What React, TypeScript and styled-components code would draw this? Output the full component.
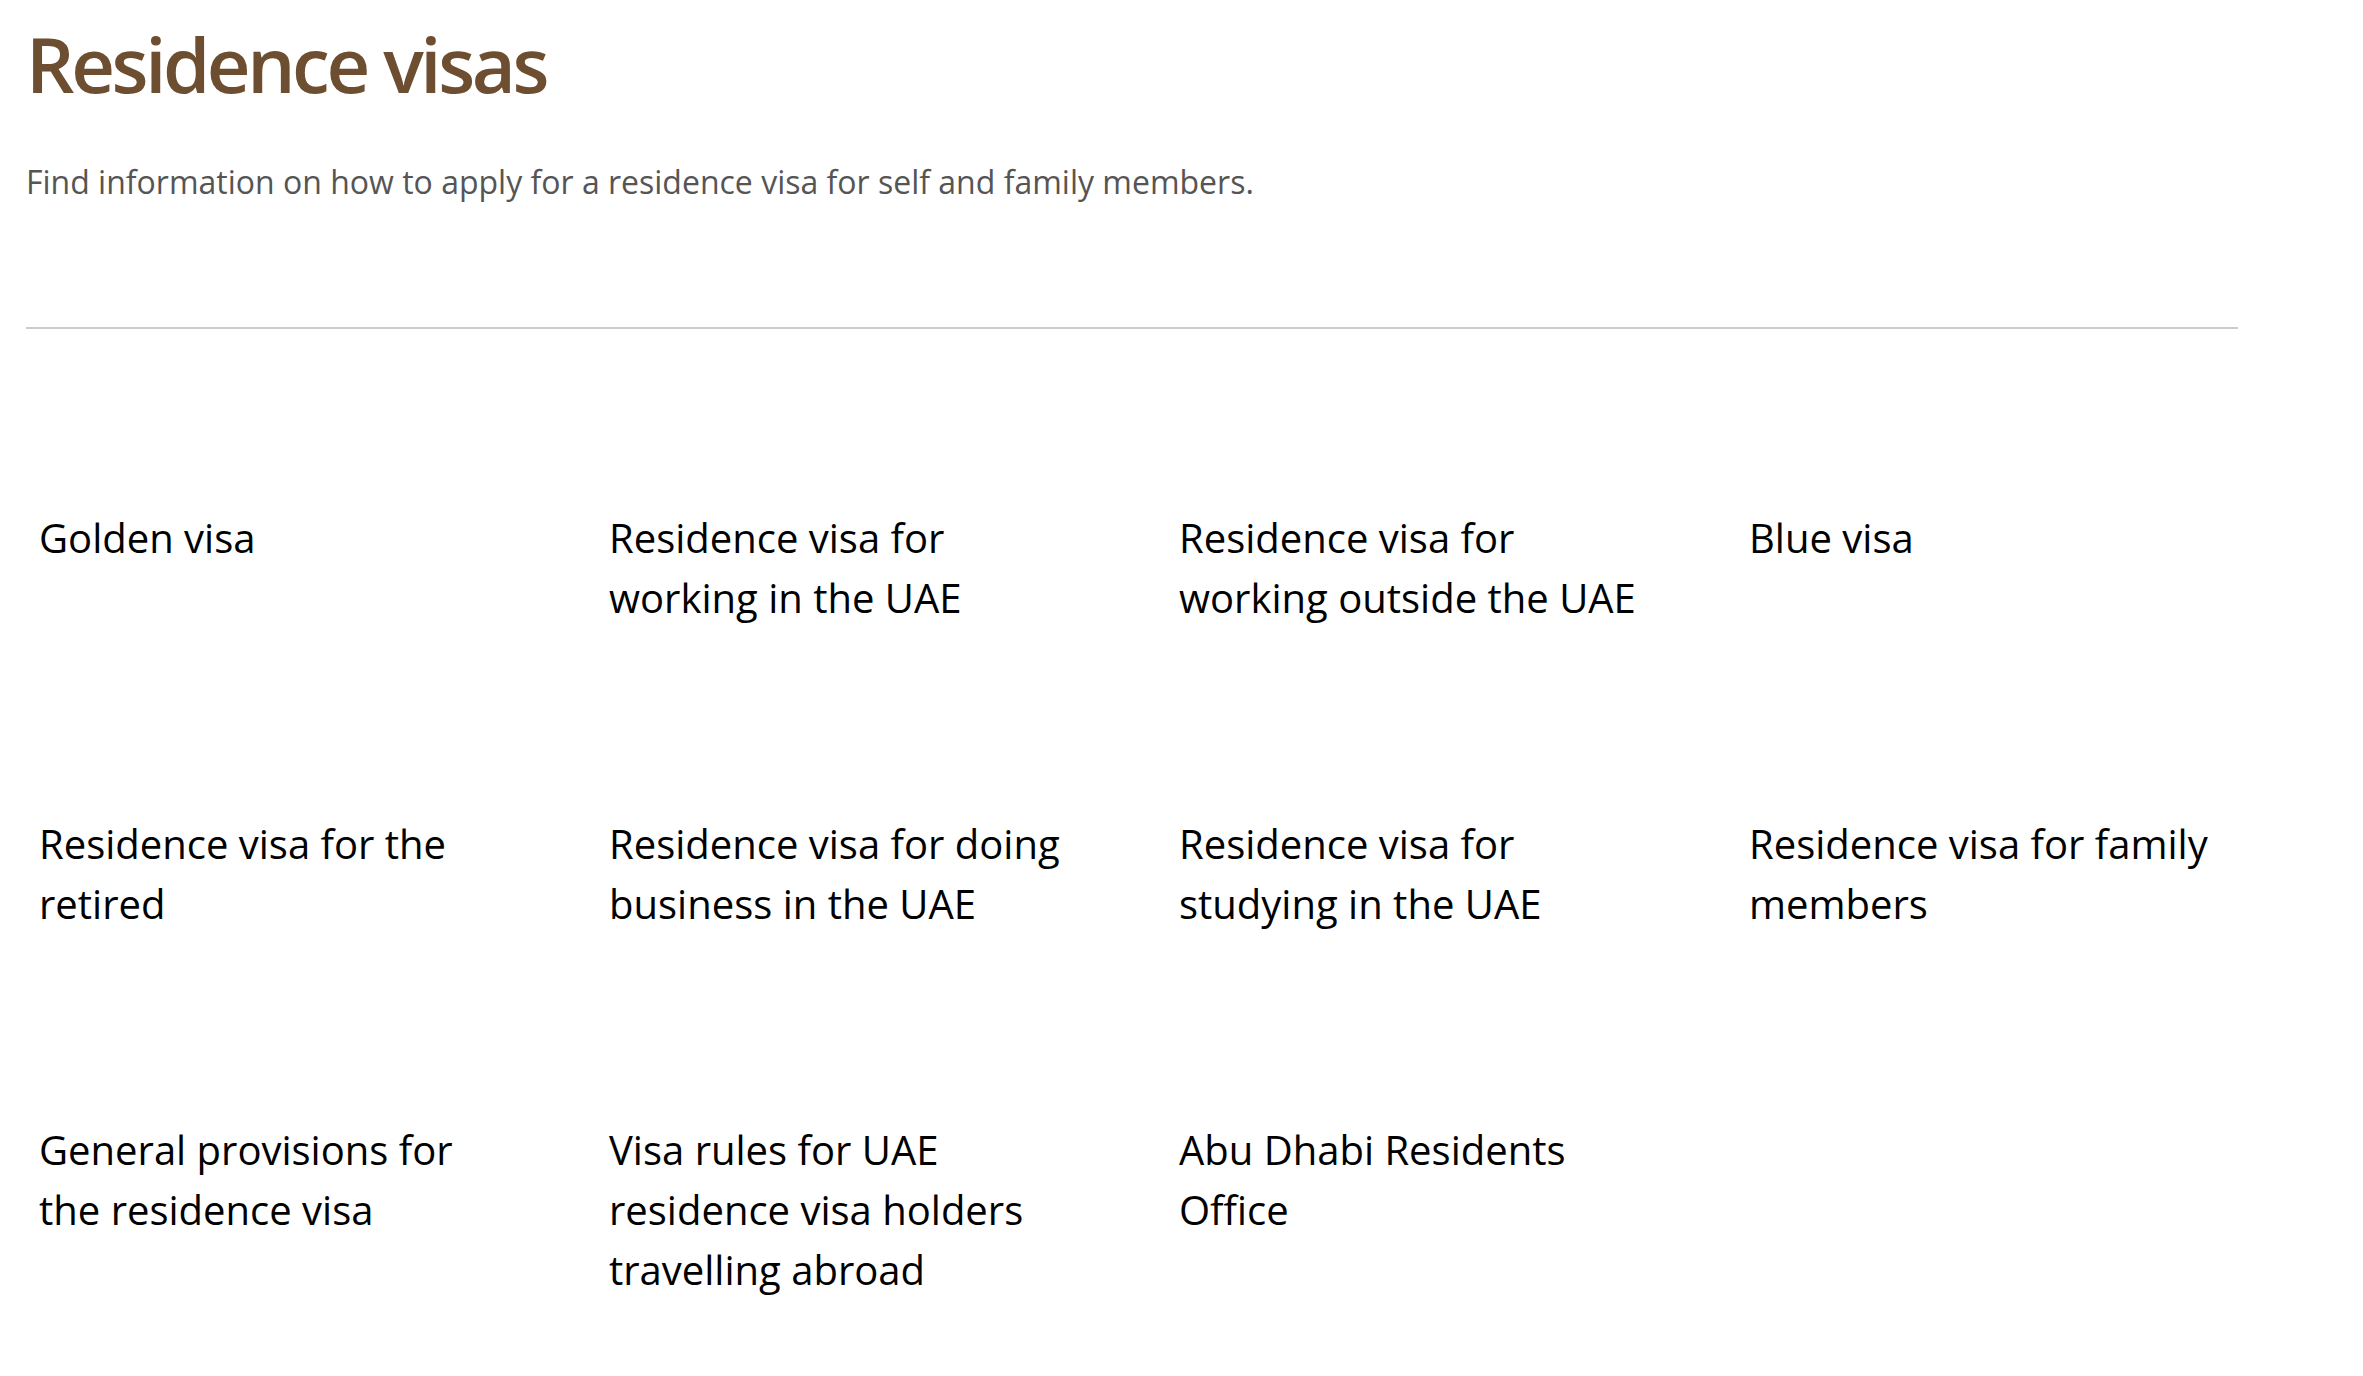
import React from "react";
import styled, { createGlobalStyle } from "styled-components";

const GlobalStyle = createGlobalStyle`
  html, body {
    margin: 0;
    padding: 0;
    background: #ffffff;
  }
  body {
    font-family: "Open Sans", "Noto Sans", "Liberation Sans", sans-serif;
  }
`;

const Page = styled.main`
  padding: 18px 0 0 26px;
  width: 2212px;
`;

const Title = styled.h1`
  margin: 0;
  font-size: 76px;
  line-height: 92px;
  font-weight: 600;
  letter-spacing: -3.4px;
  color: #6e4e30;
`;

const Lead = styled.p`
  margin: 47px 0 0;
  font-size: 32px;
  line-height: 49.5px;
  color: #555555;
`;

const Divider = styled.hr`
  margin: 120px 0 0;
  border: 0;
  height: 2px;
  background: #cccccc;
`;

const CardGrid = styled.div`
  display: grid;
  grid-template-columns: repeat(4, 570px);
  grid-auto-rows: 306px;
  margin-top: 155px;
`;

const Card = styled.a`
  display: block;
  padding: 24px 12px 24px 13px;
  color: #000000;
  text-decoration: none;
  font-size: 40px;
  line-height: 60px;
`;

const CardLabel = styled.span`
  display: block;
  max-width: 470px;
`;

const items = [
  "Golden visa",
  "Residence visa for working in the UAE",
  "Residence visa for working outside the UAE",
  "Blue visa",
  "Residence visa for the retired",
  "Residence visa for doing business in the UAE",
  "Residence visa for studying in the UAE",
  "Residence visa for family members",
  "General provisions for the residence visa",
  "Visa rules for UAE residence visa holders travelling abroad",
  "Abu Dhabi Residents Office",
];

function App() {
  return (
    <>
      <GlobalStyle />
      <Page>
        <Title>Residence visas</Title>
        <Lead>Find information on how to apply for a residence visa for self and family members.</Lead>
        <Divider />
        <CardGrid>
          {items.map((item) => (
            <Card key={item} href="#">
              <CardLabel>{item}</CardLabel>
            </Card>
          ))}
        </CardGrid>
      </Page>
    </>
  );
}

export default App;
